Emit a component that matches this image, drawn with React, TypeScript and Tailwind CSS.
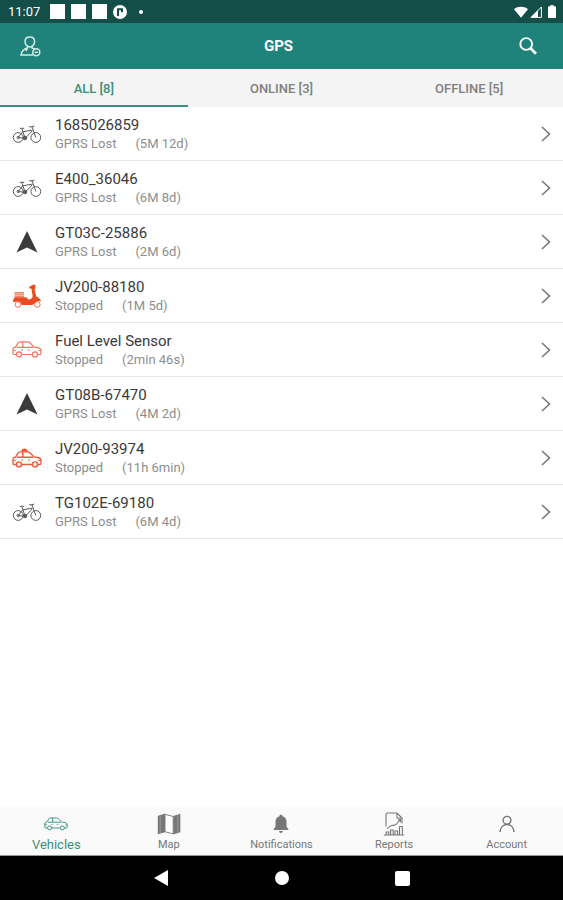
import React, { useState } from 'react';
import clsx from 'clsx';

type VehicleIcon = 'bike' | 'arrow' | 'scooter' | 'car' | 'taxi';
type Filter = 'all' | 'online' | 'offline';

interface Vehicle {
  name: string;
  status: 'GPRS Lost' | 'Stopped';
  since: string;
  icon: VehicleIcon;
}

const vehicles: Vehicle[] = [
  { name: '1685026859', status: 'GPRS Lost', since: '5M 12d', icon: 'bike' },
  { name: 'E400_36046', status: 'GPRS Lost', since: '6M 8d', icon: 'bike' },
  { name: 'GT03C-25886', status: 'GPRS Lost', since: '2M 6d', icon: 'arrow' },
  { name: 'JV200-88180', status: 'Stopped', since: '1M 5d', icon: 'scooter' },
  { name: 'Fuel Level Sensor', status: 'Stopped', since: '2min 46s', icon: 'car' },
  { name: 'GT08B-67470', status: 'GPRS Lost', since: '4M 2d', icon: 'arrow' },
  { name: 'JV200-93974', status: 'Stopped', since: '11h 6min', icon: 'taxi' },
  { name: 'TG102E-69180', status: 'GPRS Lost', since: '6M 4d', icon: 'bike' },
];

const isOnline = (v: Vehicle) => v.status === 'Stopped';

const BikeIcon = () => (
  <svg viewBox="0 0 30 20" className="w-[30px] h-5 text-[#5a5a5a]" fill="none" stroke="currentColor" strokeWidth="1">
    <circle cx="6.2" cy="13.5" r="4.9" />
    <circle cx="23.8" cy="13.5" r="4.9" />
    <circle cx="6.2" cy="13.5" r="1.2" />
    <circle cx="13" cy="14" r="1.8" fill="currentColor" />
    <path d="M6.2 13.5 10.8 7.8 20 6.2M6.200 13.500l7 .8L20.600 6.500M13 14 9.800 4.500M7.800 4.300h4.400M23.800 13.500 20 2.800h-3M20 2.800l2.300-.8" />
  </svg>
);

const ArrowIcon = () => (
  <svg viewBox="0 0 22 22" className="w-[22px] h-[22px] text-[#3b3b3b]" fill="currentColor">
    <path d="M11 0 21.500 21.500 11 16.500 0.500 21.500Z" />
  </svg>
);

const ScooterIcon = () => (
  <svg viewBox="0 0 30 26" className="w-[30px] h-[26px] text-[#ea4a20]" fill="currentColor">
    <path d="M2.500 9h9.500v5.300H2.500z" fillOpacity=".7" />
    <path d="M2.500 10.800H12M2.500 12.600H12" stroke="#fff" strokeWidth=".5" />
    <path d="M1 19c0-3 1.200-4.700 3.500-4.700H14c1 0 1.300 2.200 2.700 2.200 2 0 4-1.200 4-3.500L19.300 5.500h-2V3.800l4.400-2.300 1.600.6.300 3.400-1.100.5 1.700 7.400c2.500.8 4.300 2.600 4.800 5.100-2.600-1.200-5.400-.3-6.700 2.200l-2 1.300H9.700C9.300 19.500 8 18.400 6 18.400c-1.800 0-3 .6-5 .6z" />
    <g fill="none" stroke="currentColor" strokeWidth="1" strokeOpacity=".8">
      <circle cx="6" cy="21.500" r="2.800" />
      <circle cx="25.300" cy="21.500" r="2.800" />
    </g>
  </svg>
);

const CarBody = () => (
  <>
    <path d="M4.500 13.500H2.200c-.8 0-1.200-.4-1.200-1.200V8.500c0-1 .5-1.700 1.500-2.100l1.300-.5 2-3.600C6.400 1.300 7.200.9 8.300.9h7c1.200 0 2 .3 2.800 1.100L22 5.900l4.500.9c1.600.4 2.500 1.300 2.500 2.700v2.700c0 .8-.4 1.300-1.200 1.300h-2.300M9.500 13.500h11" />
    <path d="M5 6.300h16M10.800 1v5" />
    <path d="M9 9h1.800M16 9h1.800M1.500 9.500h2.300M26.500 9.500h2" strokeWidth="1" />
    <circle cx="7" cy="13.400" r="2.500" />
    <circle cx="23" cy="13.400" r="2.500" />
  </>
);

const CarIcon = ({ className }: { className: string }) => (
  <svg viewBox="0 0 30 17" className={className} fill="none" stroke="currentColor" strokeWidth="1.2">
    <CarBody />
  </svg>
);

const TaxiIcon = () => (
  <svg viewBox="0 -3 30 20" className="w-[30px] h-5 text-[#ef5a38]" fill="none" stroke="currentColor" strokeWidth="1.4">
    <path d="M9 .5C9.500-1.500 10.500-2.500 12.500-2.500S15.500-1.500 16 .5z" fill="currentColor" stroke="none" />
    <CarBody />
  </svg>
);

const VehicleGlyph = ({ icon }: { icon: VehicleIcon }) => {
  switch (icon) {
    case 'bike':
      return <BikeIcon />;
    case 'arrow':
      return <ArrowIcon />;
    case 'scooter':
      return <ScooterIcon />;
    case 'taxi':
      return <TaxiIcon />;
    default:
      return <CarIcon className="w-[30px] h-[17px] text-[#f0735c]" />;
  }
};

const MapIcon = () => (
  <svg viewBox="0 0 24 22" className="w-6 h-[22px]" fill="currentColor">
    <path d="M.8 2.800 8 .8v18.400L.8 21.200zM16.200 3 23.300.8v18.400l-7.100 2.200z" />
    <path d="M8 1.300 16.200 3.500v17.400L8 18.700z" fill="#fff" stroke="currentColor" strokeWidth=".9" />
    <path d="M3.200 2.500v17.600M20.800 2v17.600" stroke="#fff" strokeOpacity=".4" strokeWidth=".7" />
  </svg>
);

const BellIcon = () => (
  <svg viewBox="0 0 16 20" className="w-4 h-5" fill="currentColor">
    <path d="M8 .8c.9 0 1.500.5 1.500 1.400 2.600.8 4 2.800 4 5.400v5.200l1.800 2.300v1H.7v-1l1.800-2.300V7.600c0-2.600 1.400-4.600 4-5.400C6.500 1.300 7.100.8 8 .8zM6.100 17h3.800c0 1.200-.8 1.900-1.900 1.900S6.100 18.200 6.100 17z" />
  </svg>
);

const ReportIcon = () => (
  <svg viewBox="0 0 22 24" className="w-[22px] h-6" fill="none" stroke="currentColor" strokeWidth="1.1">
    <path d="M3 14.500V2.200L4 1h10l5 5v5.500M14 1v5h5" />
    <path d="M4 16.500c2-1 3-2.700 4.500-3 2-.3 3.500.3 5-1.500l4-4.500M14.800 8l2.700-.5v2.700" />
    <path d="M.8 23h20.400M3.200 23v-3h2.600v3M7.600 23v-5h2.600v5M12 23v-4h2.600v4M16.500 23v-8.500h2.800V23" />
  </svg>
);

const PersonIcon = () => (
  <svg viewBox="0 0 16 18" className="w-4 h-[18px]" fill="none" stroke="currentColor" strokeWidth="1.4">
    <circle cx="8" cy="5.300" r="3.900" />
    <path d="M1 17c.3-4.400 3-7.500 7-7.500s6.700 3.100 7 7.500" />
  </svg>
);

const UserSettingsIcon = () => (
  <svg viewBox="0 0 21 21" className="w-[21px] h-[21px]" fill="none" stroke="currentColor" strokeWidth="1.5">
    <path d="M9.800.9c2.900 0 4.800 1.900 4.800 4.600s-2 5.400-4.800 5.400S5 8.200 5 5.500 6.900.9 9.800.9z" />
    <path d="M7.500 10.500v1.400c-3.600.9-5.900 2.600-6.500 7h12M12 10.500v1.400l3 1.200M7.500 12l-1.500 3" />
    <circle cx="16.300" cy="16.300" r="3.500" />
    <path d="M14.600 16.300H18" />
  </svg>
);

const SearchIcon = () => (
  <svg viewBox="0 0 18 18" className="w-[18px] h-[18px]" fill="none" stroke="currentColor">
    <circle cx="7.200" cy="7" r="5.900" strokeWidth="1.900" />
    <path d="m11.500 11.300 5.500 5.500" strokeWidth="2.700" />
  </svg>
);

const StatusBar = () => (
  <div className="flex h-[23px] items-center bg-[#134e49] pl-2 pr-[7px] text-white">
    <span className="text-[13px] leading-4">11:07</span>
    <div className="ml-2.5 flex items-center gap-1.5">
      <span className="h-[15px] w-[15px] bg-white" />
      <span className="h-[15px] w-[15px] bg-white" />
      <span className="h-[15px] w-[15px] bg-white" />
      <svg viewBox="0 0 14 14" className="h-3.5 w-3.5">
        <circle cx="7" cy="7" r="7" fill="#fff" />
        <path d="M5 11V4.200h4M9 3.200v4" fill="none" stroke="#134e49" strokeWidth="2" />
      </svg>
      <span className="ml-1.5 h-1 w-1 rounded-full bg-white" />
    </div>
    <div className="ml-auto flex items-center">
      <svg viewBox="0 0 14 12" className="h-3 w-3.5" fill="#fff">
        <path d="M7 11.800 0 3.200C4 0 10 0 14 3.200z" />
      </svg>
      <svg viewBox="0 0 12 12" className="ml-0.5 h-3 w-3">
        <path d="M11.400 1v10.400H1z" fill="none" stroke="#fff" />
        <path d="M8 4.400V11.500H.8z" fill="#fff" />
      </svg>
      <svg viewBox="0 0 8 13" className="ml-1.5 h-[13px] w-2" fill="#fff">
        <path d="M2.500 0h3v1.200H7.400L8 2v10.300l-.7.7H.7L0 12.300V2l.6-.8h1.900z" />
      </svg>
    </div>
  </div>
);

const navItems = [
  { label: 'Vehicles', icon: <CarIcon className="w-6 h-3.5" /> },
  { label: 'Map', icon: <MapIcon /> },
  { label: 'Notifications', icon: <BellIcon /> },
  { label: 'Reports', icon: <ReportIcon /> },
  { label: 'Account', icon: <PersonIcon /> },
];

const App: React.FC = () => {
  const [filter, setFilter] = useState<Filter>('all');
  const [section, setSection] = useState('Vehicles');

  const online = vehicles.filter(isOnline);
  const offline = vehicles.filter((v) => !isOnline(v));
  const lists: Record<Filter, Vehicle[]> = { all: vehicles, online, offline };

  const tabs: { id: Filter; label: string }[] = [
    { id: 'all', label: `ALL [${vehicles.length}]` },
    { id: 'online', label: `ONLINE [${online.length}]` },
    { id: 'offline', label: `OFFLINE [${offline.length}]` },
  ];

  return (
    <div className="flex min-h-screen flex-col bg-white font-[Roboto,sans-serif]">
      <StatusBar />

      <header className="grid h-[46px] grid-cols-3 items-center bg-[#1f827b] pl-5 pr-[26px] text-white">
        <button aria-label="User settings" className="justify-self-start text-[#d5ebe8]">
          <UserSettingsIcon />
        </button>
        <h1 className="text-center text-[15px] font-bold">GPS</h1>
        <button aria-label="Search" className="justify-self-end">
          <SearchIcon />
        </button>
      </header>

      <div className="grid h-[38px] grid-cols-3 bg-[#f4f4f4]">
        {tabs.map((tab) => (
          <button
            key={tab.id}
            onClick={() => setFilter(tab.id)}
            className={clsx(
              'border-b-2 pt-1 text-[13px] font-medium',
              filter === tab.id ? 'border-[#3b8f86] text-[#3b8f7c]' : 'border-transparent text-[#808080]'
            )}
          >
            {tab.label}
          </button>
        ))}
      </div>

      <ul className="flex-1">
        {lists[filter].map((v) => (
          <li key={v.name}>
            <button className="flex h-[54px] w-full items-center border-b border-[#e6e6e6] pl-3 pr-3 text-left">
              <span className="flex w-[30px] justify-center">
                <VehicleGlyph icon={v.icon} />
              </span>
              <span className="ml-[13px] flex-1">
                <span className="block text-[15px] leading-5 text-[#3a3a3a]">{v.name}</span>
                <span className="flex gap-[19px] text-[13px] leading-[18px] text-[#8e8e8e]">
                  <span>{v.status}</span>
                  <span>({v.since})</span>
                </span>
              </span>
              <svg viewBox="0 0 10 16" className="h-4 w-2.5 text-[#777]" fill="none" stroke="currentColor" strokeWidth="1.6">
                <path d="M1 1l7.500 7L1 15" />
              </svg>
            </button>
          </li>
        ))}
      </ul>

      <nav className="grid h-[50px] grid-cols-5 border-b border-[#999] bg-[#fafafa]">
        {navItems.map((item) => (
          <button
            key={item.label}
            onClick={() => setSection(item.label)}
            className={clsx(
              'flex flex-col items-center pt-1.5',
              section === item.label ? 'text-[13px] text-[#3b8f7c]' : 'text-[11px] text-[#777]'
            )}
          >
            <span className="flex h-6 items-center">{item.icon}</span>
            <span className="mt-px leading-4">{item.label}</span>
          </button>
        ))}
      </nav>

      <div className="grid h-11 grid-cols-[1fr_auto_1fr] items-center gap-[106px] bg-black">
        <button aria-label="Back" className="justify-self-end">
          <svg viewBox="0 0 16 16" className="h-4 w-4" fill="#fff">
            <path d="M15 0v16L1 8z" />
          </svg>
        </button>
        <button aria-label="Home" className="h-3.5 w-3.5 rounded-full bg-white" />
        <button aria-label="Recent apps" className="h-[15px] w-[15px] rounded-xs bg-white" />
      </div>
    </div>
  );
};

export default App;
